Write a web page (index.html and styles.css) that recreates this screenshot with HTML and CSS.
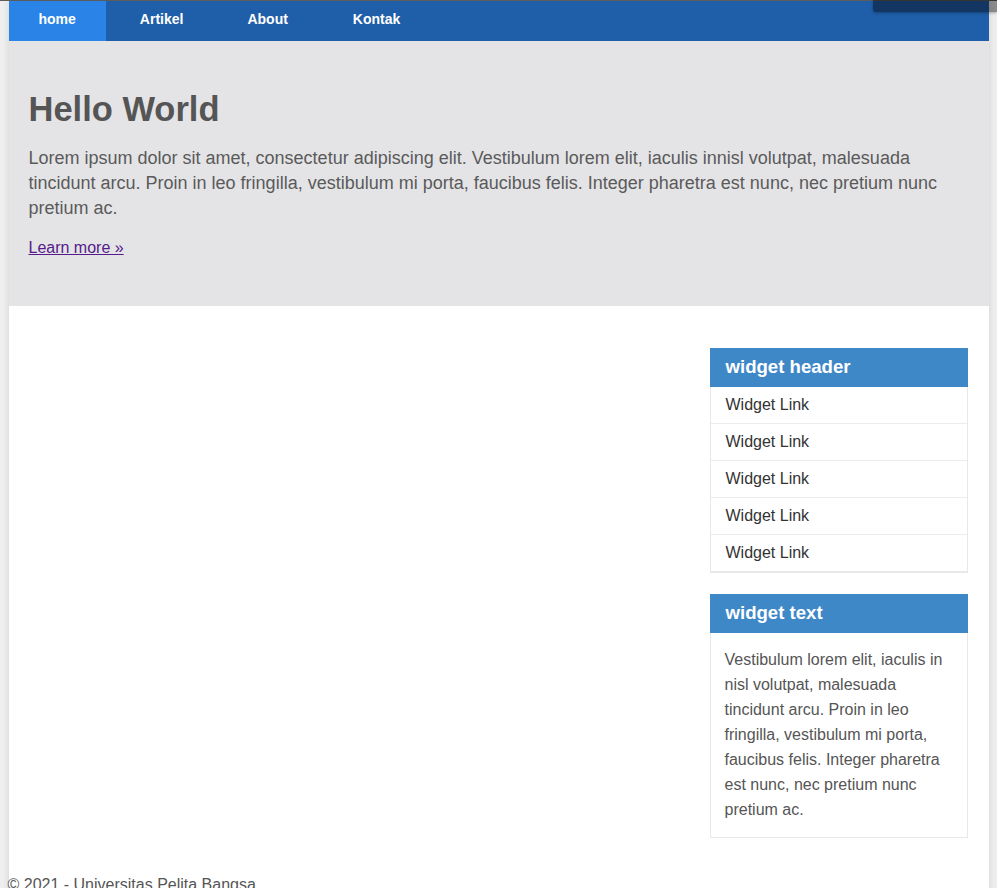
FILE: index.html
```html
<!DOCTYPE html>
<html lang="id">
<head>
<meta charset="utf-8">
<title>Universitas Pelita Bangsa</title>
<link rel="stylesheet" href="styles.css">
</head>
<body>
<div class="overlay"></div>
<div class="container">
  <nav class="nav">
    <a class="nav-link active" href="#">home</a>
    <a class="nav-link" href="#">Artikel</a>
    <a class="nav-link" href="#">About</a>
    <a class="nav-link" href="#">Kontak</a>
  </nav>
  <section class="hero">
    <h1 class="hero-title">Hello World</h1>
    <p class="hero-text">Lorem ipsum dolor sit amet, consectetur adipiscing elit. Vestibulum lorem elit, iaculis innisl volutpat, malesuada tincidunt arcu. Proin in leo fringilla, vestibulum mi porta, faucibus felis. Integer pharetra est nunc, nec pretium nunc pretium ac.</p>
    <p class="hero-more"><a class="more-link" href="#">Learn more &raquo;</a></p>
  </section>
  <div class="main">
    <div class="content"></div>
    <aside class="sidebar">
      <div class="widget">
        <h3 class="widget-title">widget header</h3>
        <ul class="widget-list">
          <li class="widget-item"><a href="#">Widget Link</a></li>
          <li class="widget-item"><a href="#">Widget Link</a></li>
          <li class="widget-item"><a href="#">Widget Link</a></li>
          <li class="widget-item"><a href="#">Widget Link</a></li>
          <li class="widget-item"><a href="#">Widget Link</a></li>
        </ul>
      </div>
      <div class="widget">
        <h3 class="widget-title">widget text</h3>
        <p class="widget-body">Vestibulum lorem elit, iaculis in nisl volutpat, malesuada tincidunt arcu. Proin in leo fringilla, vestibulum mi porta, faucibus felis. Integer pharetra est nunc, nec pretium nunc pretium ac.</p>
      </div>
    </aside>
  </div>
  <footer class="footer">&copy; 2021 - Universitas Pelita Bangsa</footer>
</div>
</body>
</html>
```
FILE: styles.css
```css
html, body {
  margin: 0;
  padding: 0;
}
body {
  background: #efefef;
  border-top: 1px solid #5c5c5c;
  font-family: "Liberation Sans", Arial, sans-serif;
  color: #555;
  min-height: 887px;
}
.overlay {
  position: fixed;
  top: 0;
  right: 0;
  width: 124px;
  height: 12px;
  background: rgba(0, 0, 0, 0.42);
  border-bottom-left-radius: 3px;
  box-shadow: 0 1px 3px rgba(0, 0, 0, 0.3);
  z-index: 10;
}
.container {
  width: 980px;
  margin: 0 auto;
  background: #fff;
  box-shadow: 0 0 8px rgba(0, 0, 0, 0.12);
  min-height: 887px;
}
.nav {
  background: #1f5ea8;
  height: 40px;
  font-size: 0;
}
.nav-link {
  display: inline-block;
  height: 40px;
  line-height: 36px;
  padding: 0 30px;
  margin-right: 4px;
  color: #fff;
  font-weight: bold;
  font-size: 14px;
  text-decoration: none;
}
.nav-link:nth-child(3) {
  margin-right: 5px;
}
.nav-link.active {
  background: #2a83e6;
}
.hero {
  background: #e4e4e6;
  padding: 30px 20px 31px;
}
.hero-title {
  margin: 18px 0 17px;
  font-size: 34.5px;
  line-height: 40px;
  font-weight: bold;
  color: #555;
}
.hero-text {
  margin: 0 0 15px;
  font-size: 18px;
  line-height: 25px;
  color: #5a5a5a;
}
.hero-more {
  margin: 0 0 15px;
  font-size: 16px;
  line-height: 24px;
}
.more-link {
  color: #551a8b;
}
.main {
  display: flex;
  padding: 42px 21px 20px 20px;
  gap: 20px;
}
.content {
  flex: 1;
}
.sidebar {
  width: 258px;
  display: flex;
  flex-direction: column;
  gap: 21px;
}
.widget-title {
  margin: 0;
  background: #3f88c8;
  color: #fff;
  font-size: 18.6px;
  font-weight: bold;
  height: 39px;
  line-height: 37px;
  padding: 0 16px;
}
.widget-list {
  list-style: none;
  margin: 0;
  padding: 0;
  border: 1px solid #e8e8e8;
  border-top: none;
  border-bottom-width: 2px;
}
.widget-item {
  border-bottom: 1px solid #ececec;
}
.widget-item:last-child {
  border-bottom: none;
}
.widget-item a {
  display: block;
  height: 36px;
  line-height: 35px;
  padding: 0 15px;
  color: #333;
  font-size: 16px;
  text-decoration: none;
}
.widget-body {
  margin: 0;
  padding: 14px 14px 15px;
  border: 1px solid #e8e8e8;
  border-top: none;
  font-size: 16px;
  line-height: 25px;
  color: #555;
}
.footer {
  padding: 18px 0;
  font-size: 16px;
  color: #555;
  margin-left: -1px;
}
```
